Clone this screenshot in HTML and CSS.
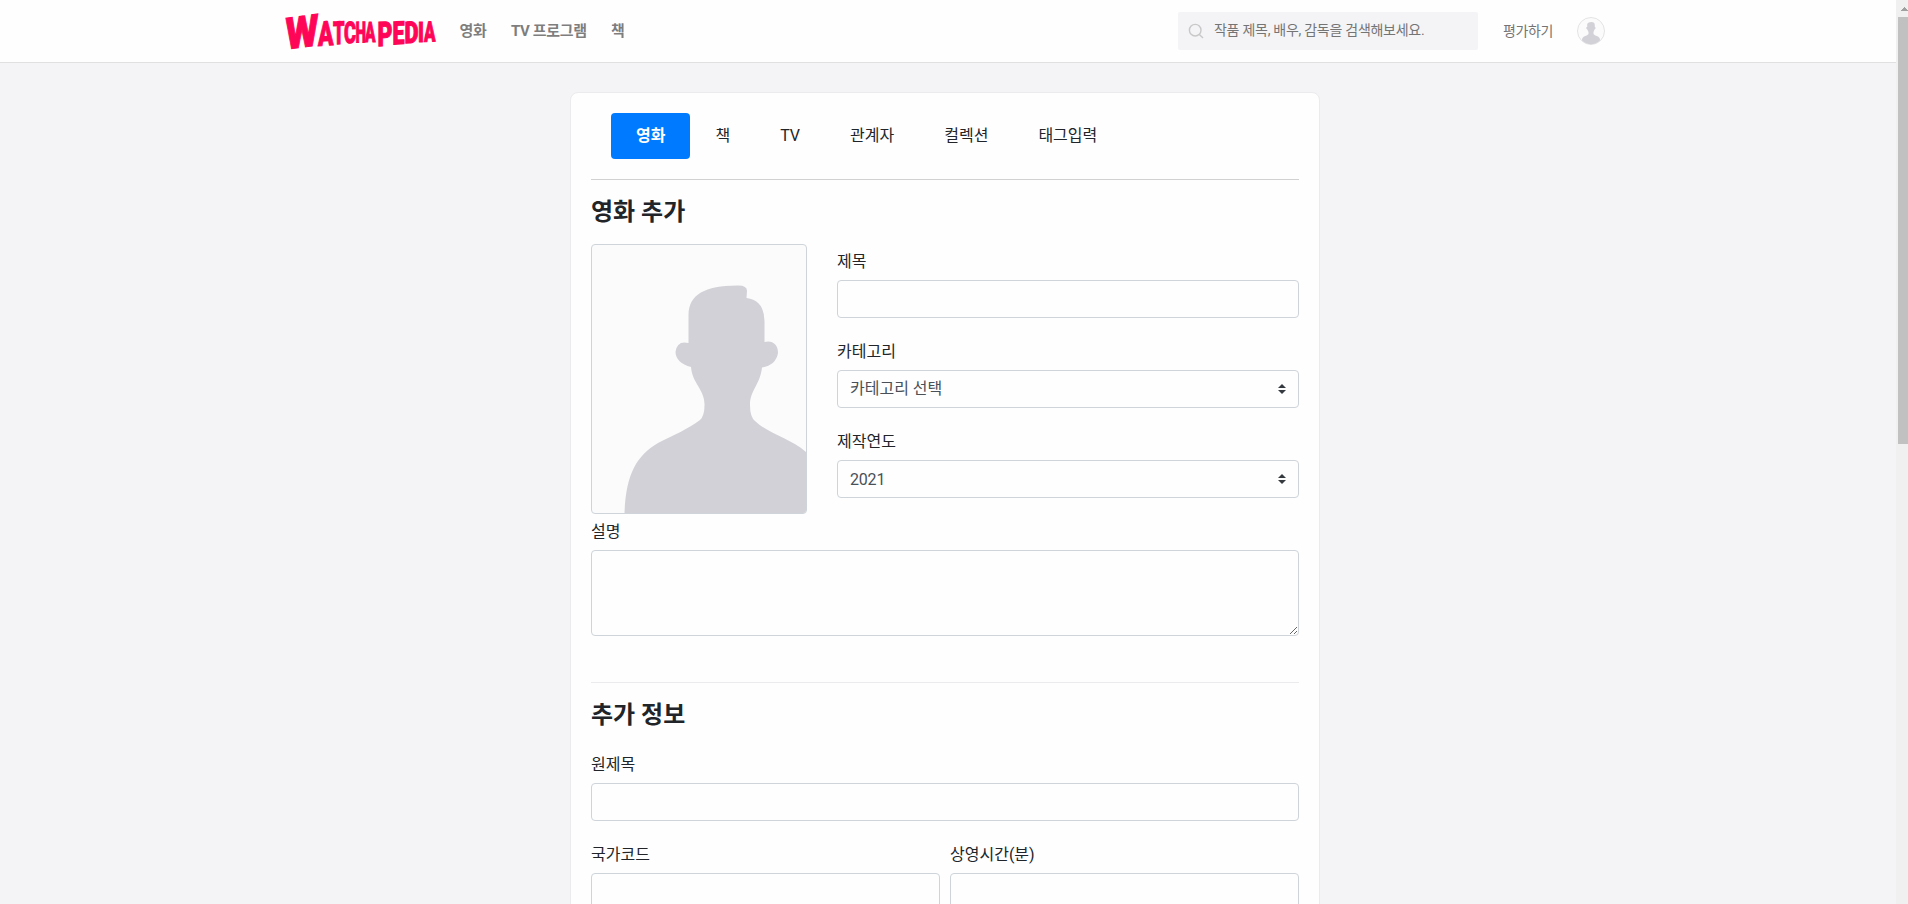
FILE: index.html
```html
<!DOCTYPE html>
<html lang="ko">
<head>
<meta charset="utf-8">
<title>WATCHAPEDIA</title>
<link rel="stylesheet" href="styles.css">
</head>
<body>
<div class="page">
  <header class="header">
    <svg class="logo" viewBox="0 0 152 38" role="img" aria-label="WATCHAPEDIA">
      <g class="logo-text">
        <text transform="translate(0.5 37.500) skewY(-7.500)" font-size="44" textLength="33" lengthAdjust="spacingAndGlyphs">W</text>
        <text transform="translate(33 34) skewY(-4)" font-size="34" textLength="15.500" lengthAdjust="spacingAndGlyphs">A</text>
        <text transform="translate(48 32.500) skewY(-3)" font-size="32" textLength="11.500" lengthAdjust="spacingAndGlyphs">T</text>
        <text transform="translate(59 31.200) skewY(-2)" font-size="30" textLength="12" lengthAdjust="spacingAndGlyphs">C</text>
        <text transform="translate(70.500 30.500) skewY(-1)" font-size="29" textLength="10.500" lengthAdjust="spacingAndGlyphs">H</text>
        <text transform="translate(80 30)" font-size="28" textLength="10.500" lengthAdjust="spacingAndGlyphs">A</text>
        <text transform="translate(92.500 34.200) skewY(-2)" font-size="34" textLength="15" lengthAdjust="spacingAndGlyphs">P</text>
        <text transform="translate(107.500 32.600) skewY(-3)" font-size="32" textLength="12" lengthAdjust="spacingAndGlyphs">E</text>
        <text transform="translate(119.500 31.300) skewY(-3)" font-size="30" textLength="14" lengthAdjust="spacingAndGlyphs">D</text>
        <text transform="translate(133 30.200)" font-size="28.500" textLength="6" lengthAdjust="spacingAndGlyphs">I</text>
        <text transform="translate(139 29.800) skewY(-2)" font-size="28" textLength="11.500" lengthAdjust="spacingAndGlyphs">A</text>
      </g>
    </svg>
    <nav class="nav"><a>영화</a><a>TV 프로그램</a><a>책</a></nav>
    <div class="search">
      <svg class="search-icon" viewBox="0 0 16 16"><circle cx="7.200" cy="7.200" r="5.800"/><path d="M11.400 11.400L15 15"/></svg>
      <span class="placeholder">작품 제목, 배우, 감독을 검색해보세요.</span>
    </div>
    <a class="rate">평가하기</a>
    <svg class="avatar" viewBox="0 0 28 28">
      <circle class="avatar-bg" cx="14" cy="14" r="13.500"/>
      <path class="person" d="M10.200 7.500Q10.300 5 14.500 5Q17.800 5 17.800 8.200V10Q19 10 18.500 11.500L17.500 12.500L16.500 15V17Q17 18.200 21 19.500Q23 20.500 23.200 23.300Q19 27.300 14 27.300T4.800 23.300Q5 20.500 7 19.500Q11 18.200 11.500 17V15L10.300 12.500Q8.500 11.500 9.500 10H10.200Z"/>
    </svg>
  </header>
  <main class="main">
    <section class="card">
      <nav class="tabs">
        <a class="tab tab-active">영화</a><a class="tab">책</a><a class="tab">TV</a><a class="tab">관계자</a><a class="tab">컬렉션</a><a class="tab">태그입력</a>
      </nav>
      <h2 class="title">영화 추가</h2>
      <div class="basic">
        <svg class="poster" viewBox="0 0 214 268">
          <path class="person" d="M96.500 98V70C97 49 113 41 145 40.500Q155 40 155 46L154.500 53Q172 55 172.500 76V97C180 95 186 99 186 108Q184 120 170 122.500C168 140 158 145 158 160Q158 172 163 176C178 190 198 193 214 207V268H32.500C34 230 44 211 66 198C82 190 96 184 108 175Q112.500 171 112.500 160C113 145 100 138 99 122Q84 118 83.500 107Q85 95 96.500 98Z"/>
        </svg>
        <div class="fields">
          <div class="field"><label>제목</label><div class="control"></div></div>
          <div class="field"><label>카테고리</label><div class="control select"><span>카테고리 선택</span><svg class="arrows" viewBox="0 0 8 10"><path d="M4 0L0 4H8ZM0 6H8L4 10Z"/></svg></div></div>
          <div class="field"><label>제작연도</label><div class="control select"><span class="year">2021</span><svg class="arrows" viewBox="0 0 8 10"><path d="M4 0L0 4H8ZM0 6H8L4 10Z"/></svg></div></div>
        </div>
      </div>
      <div class="field"><label for="desc">설명</label><textarea id="desc" class="control area"></textarea></div>
      <div class="rule"></div>
      <h2 class="title title-extra">추가 정보</h2>
      <div class="fields">
        <div class="field"><label>원제목</label><div class="control"></div></div>
        <div class="pair">
          <div class="field"><label>국가코드</label><div class="control"></div></div>
          <div class="field"><label>상영시간(분)</label><div class="control"></div></div>
        </div>
      </div>
    </section>
  </main>
</div>
<div class="scrollbar"><svg class="scroll-up" viewBox="0 0 7 4"><path d="M3 0H4V1H5V2H6V3H7V4H0V3H1V2H2V1H3Z"/></svg><div class="thumb"></div></div>
</body>
</html>
```
FILE: styles.css
```css
* { box-sizing: border-box; }
body {
  margin: 0;
  height: 904px;
  overflow: hidden;
  display: flex;
  background: #f4f4f7;
  color: #212529;
  font: 16px/24px Roboto, "Noto Sans CJK KR", sans-serif;
}
.page { width: 1896px; height: 904px; overflow: hidden; }
.header {
  height: 63px;
  padding: 0 291px 1px 285px;
  display: flex;
  align-items: center;
  background: #fefefe;
  border-bottom: 1px solid #e0e0e0;
}
.logo { width: 152px; height: 38px; overflow: visible; }
.logo-text {
  fill: #ff0558;
  stroke: #ff0558;
  stroke-width: 1;
  font-family: Roboto, sans-serif;
  font-weight: 900;
}
.nav {
  margin-left: 22.5px;
  display: flex;
  gap: 24.5px;
  color: #7e7e7e;
  font-size: 15px;
  font-weight: 700;
  letter-spacing: -.35px;
}
.search {
  margin-left: auto;
  width: 300px;
  height: 38px;
  padding-left: 10px;
  display: flex;
  align-items: center;
  gap: 10px;
  border-radius: 2px;
  background: #f4f4f7;
  color: #747474;
  font-size: 14px;
}
.placeholder { padding-bottom: 2px; letter-spacing: -.27px; }
.search-icon { width: 16px; height: 16px; fill: none; stroke: #c8c8c8; stroke-width: 1.4; }
.rate {
  width: 52px;
  margin: 0 22px 0 25px;
  color: #747474;
  font-size: 14px;
  letter-spacing: -.4px;
  white-space: nowrap;
}
.avatar { width: 28px; height: 28px; }
.avatar-bg { fill: #fbfbfb; stroke: #e3e3e5; }
.person { fill: #d2d1d7; }
.main { padding: 29px 0 0 570px; }
.card {
  width: 750px;
  height: 1200px;
  padding: 20px 20px;
  background: #fefefe;
  border: 1px solid #ebebed;
  border-radius: 8px;
}
.tabs {
  height: 67px;
  padding-left: 20px;
  display: flex;
  border-bottom: 1px solid #d1d1d2;
}
.tab { height: 46px; padding: 11px 25px; border-radius: 4px; }
.tab-active { background: #007bff; color: #fff; font-weight: 700; }
.title { margin: 18px 0 17px; font-size: 24px; line-height: 29px; font-weight: 700; }
.basic { display: flex; gap: 30px; margin-bottom: 6px; }
.poster {
  width: 216px;
  height: 270px;
  background: #fbfbfb;
  border: 1px solid #ced4da;
  border-radius: 4px;
}
.fields { flex: 1; display: flex; flex-direction: column; gap: 22px; }
.basic .fields { padding-top: 6px; }
label { display: block; margin-bottom: 6px; }
.control {
  display: block;
  width: 100%;
  height: 38px;
  padding: 6px 12px;
  background: #fefefe;
  border: 1px solid #ced4da;
  border-radius: 4px;
  color: #495057;
}
.select { display: flex; justify-content: space-between; align-items: center; }
.year { padding-top: 1px; letter-spacing: -.2px; }
.arrows { width: 8px; height: 10px; fill: #343a40; }
.area { height: 86px; resize: vertical; font: inherit; }
.rule { margin-top: 46px; border-top: 1px solid #ebebed; }
.title-extra { margin-bottom: 23px; }
.pair { display: flex; gap: 10px; }
.pair .field { flex: 1; }
.scrollbar { width: 12px; height: 904px; padding: 7px 0 0 2px; background: #f0f0f0; overflow: hidden; }
.scroll-up { display: block; width: 7px; height: 4px; margin: 0 0 6px 3px; fill: #a0a0a0; }
.thumb { width: 10px; height: 427px; background: #c1c1c1; }
```
